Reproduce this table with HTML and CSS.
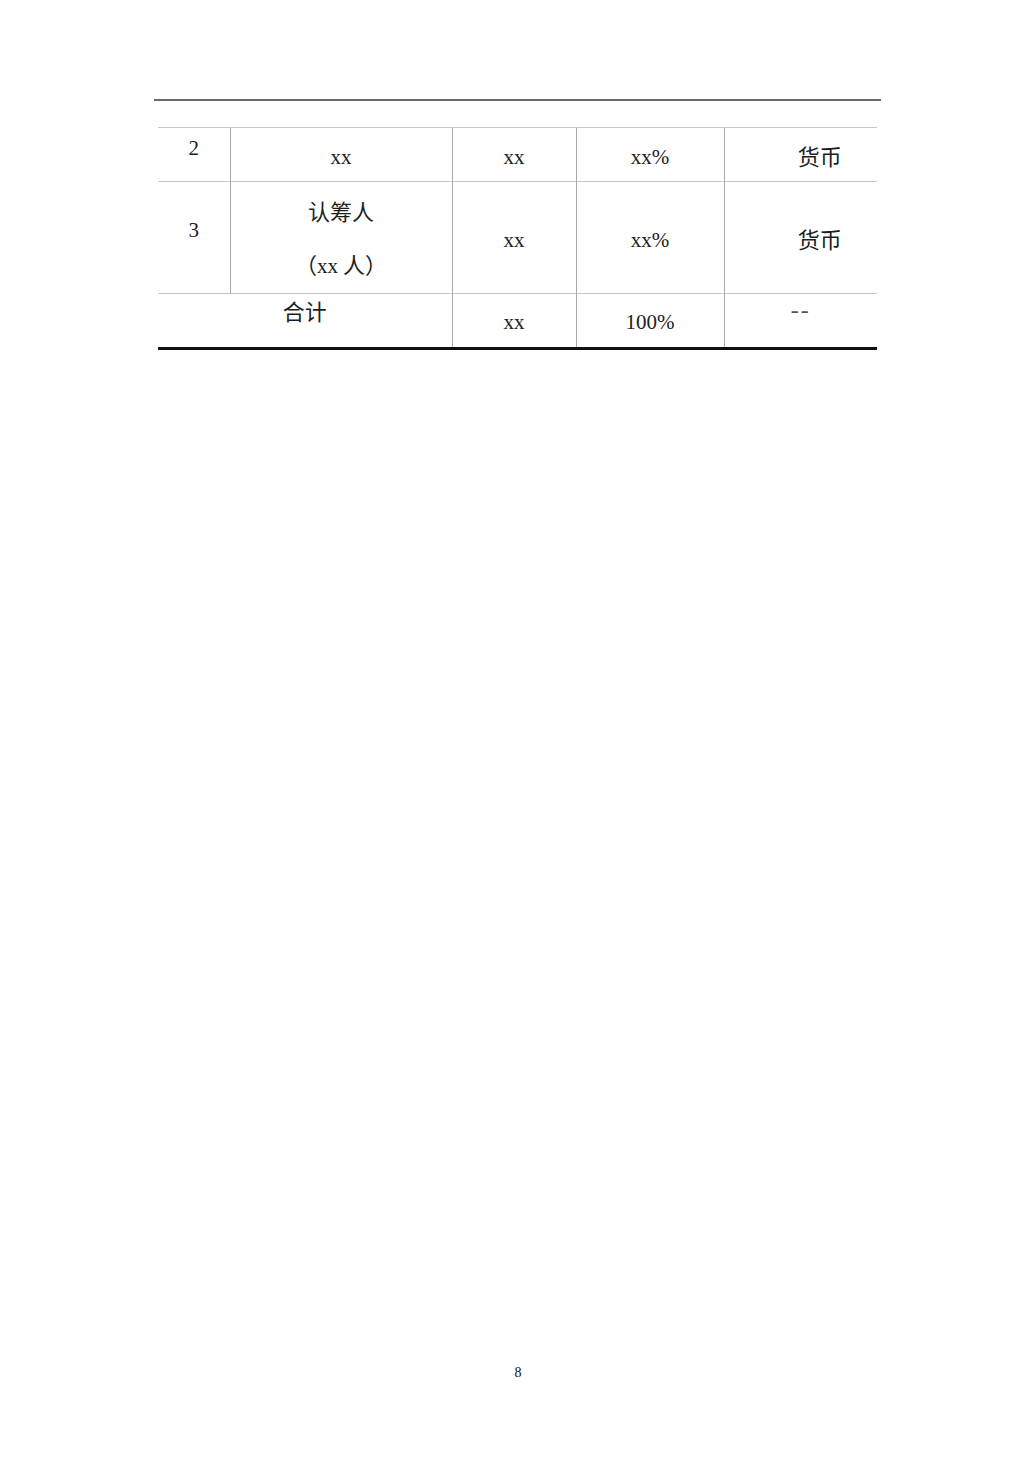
FILE: index.html
```html
<!DOCTYPE html>
<html lang="zh">
<head>
<meta charset="utf-8">
<link rel="stylesheet" href="styles.css">
</head>
<body>
<div class="page">
  <div class="rule"></div>
  <table class="tbl">
    <colgroup>
      <col class="c1"><col class="c2"><col class="c3"><col class="c4"><col class="c5">
    </colgroup>
    <tr class="r1">
      <td class="num">2</td>
      <td class="vl">xx</td>
      <td class="vl">xx</td>
      <td class="vl">xx%</td>
      <td class="cn cur">货币</td>
    </tr>
    <tr class="r2">
      <td class="num">3</td>
      <td class="two"><div class="cn">认筹人</div><div class="cn">（<span class="lat">xx</span> 人）</div></td>
      <td class="vl">xx</td>
      <td class="vl">xx%</td>
      <td class="cn cur">货币</td>
    </tr>
    <tr class="r3">
      <td colspan="2" class="cn total">合计</td>
      <td class="vl">xx</td>
      <td class="vl">100%</td>
      <td class="dash">--</td>
    </tr>
  </table>
  <div class="spacer"></div>
  <div class="pagenum">8</div>
</div>
</body>
</html>
```
FILE: styles.css
```css
html, body { margin: 0; padding: 0; background: #fff; }
.page {
  width: 1035px;
  height: 1465px;
  display: flex;
  flex-direction: column;
  font-family: "Liberation Serif", "Noto Sans CJK SC", serif;
  color: #222;
}
.rule {
  margin: 99px 0 0 154px;
  width: 727px;
  height: 2px;
  background: #6a6a6a;
}
.tbl {
  margin: 26px 0 0 158px;
  width: 719px;
  border-collapse: collapse;
  table-layout: fixed;
  border-top: 1px solid #c4c4c4;
  border-bottom: 3px solid #111;
  font-size: 21px;
}
.c1 { width: 72px; } .c2 { width: 222px; } .c3 { width: 124px; } .c4 { width: 148px; } .c5 { width: 153px; }
.r1 { height: 54px; }
.r2 { height: 109px; }
.r3 { height: 55px; }
.tbl td {
  padding: 0;
  text-align: center;
  vertical-align: middle;
  border-left: 1px solid #a8a8a8;
  border-top: 1px solid #c8c8c8;
  line-height: 24px;
}
.tbl td:first-child { border-left: none; }
.tbl .vl { padding-top: 4px; }
.tbl .num { vertical-align: top; }
.r1 .num { padding-top: 8px; }
.r2 .num { padding-top: 36px; }
.cn { font-family: "Noto Sans CJK SC", sans-serif; font-size: 22px; color: #1e1e1e; }
.lat { font-family: "Liberation Serif", serif; font-size: 21px; }
.tbl .two { padding-top: 2px; }
.two .cn { line-height: 53px; }
.tbl .cur { padding-left: 38px; }
.tbl .total { vertical-align: top; padding-top: 4px; }
.tbl.tbl .r3 .vl { padding-top: 2px; }
.tbl .dash { vertical-align: top; padding-top: 4px; letter-spacing: 2px; font-size: 24px; color: #555; }
.spacer { flex: 1; }
.pagenum {
  font-family: "Liberation Serif", serif;
  font-size: 14px;
  color: #111;
  text-align: center;
  margin-bottom: 84px;
  padding-left: 1px;
}
```
